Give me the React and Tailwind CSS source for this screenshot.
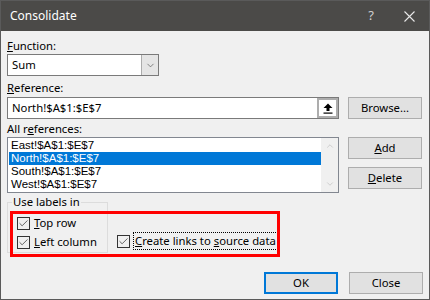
import { Check, ChevronDown, ChevronUp } from "lucide-react"

const font = { fontFamily: '"Noto Sans", "Liberation Sans", sans-serif' }
const listFont = { fontFamily: '"Liberation Sans", Arial, sans-serif' }

function Btn({ children, primary, className = "" }) {
  return (
    <div
      className={`h-[22px] w-[74px] flex items-center justify-center bg-[#e1e1e1] text-[11.3px] text-black ${
        primary ? "border-2 border-[#0078d7]" : "border border-[#adadad]"
      } ${className}`}
    >
      {children}
    </div>
  )
}

function Box() {
  return (
    <div className="w-[13px] h-[13px] border border-[#333] flex items-center justify-center shrink-0">
      <Check size={11} strokeWidth={1.6} className="text-[#333]" />
    </div>
  )
}

export default function App() {
  const refs = ["East!$A$1:$E$7", "North!$A$1:$E$7", "South!$A$1:$E$7", "West!$A$1:$E$7"]

  return (
    <div style={font} className="w-[430px] h-[300px] bg-[#f0f0f0] border border-[#5a5a5a] flex flex-col text-[11.3px] text-black overflow-hidden">
      {/* Title bar */}
      <div className="h-[30px] bg-[#4b4a48] flex items-center text-white shrink-0">
        <span className="ml-[9px] text-[12px]">Consolidate</span>
        <span className="ml-auto text-[13px] text-[#d0d0d0] mr-[30px]">?</span>
        <svg width="11" height="11" viewBox="0 0 11 11" className="mr-[14px]">
          <path d="M0.5 0.5 L10.5 10.5 M10.5 0.5 L0.5 10.5" stroke="#e8e8e8" strokeWidth="1.1" />
        </svg>
      </div>

      <div className="relative flex flex-col pl-[6px] pr-[6px]">
        <div className="mt-[7px] h-[16px] leading-[16px]"><u>F</u>unction:</div>
        <div className="w-[152px] h-[22px] border border-[#7a7a7a] bg-white flex">
          <span className="pl-[4px] leading-[20px]">Sum</span>
          <div className="ml-auto w-[17px] h-full bg-[#e5e5e5] border-l border-[#acacac] flex items-center justify-center">
            <ChevronDown size={11} strokeWidth={1.5} className="text-[#555]" />
          </div>
        </div>

        <div className="mt-[4px] h-[16px] leading-[16px]"><u>R</u>eference:</div>
        <div className="mt-[1px] flex gap-[9px]">
          <div className="w-[332px] h-[22px] border border-[#7a7a7a] bg-white flex">
            <span className="pl-[4px] leading-[20px]">North!$A$1:$E$7</span>
            <div className="ml-auto w-[21px] h-full border-2 border-[#adadad] bg-white flex items-center justify-center">
              <svg width="10" height="11" viewBox="0 0 10 11">
                <path d="M5 0.5 L9.5 5 L6.5 5 L6.5 8 L3.5 8 L3.5 5 L0.5 5 Z" fill="#000" />
                <rect x="0.5" y="9.5" width="9" height="1.2" fill="#000" />
              </svg>
            </div>
          </div>
          <Btn>Browse...</Btn>
        </div>

        <div className="mt-[2px] h-[16px] leading-[16px]">All r<u>e</u>ferences:</div>
        <div className="flex gap-[9px]">
          <div className="w-[332px] h-[56px] border border-[#828790] bg-white flex">
            <div style={listFont} className="flex-1 pt-[1px] pl-[1px] text-[11.5px]">
              {refs.map((r, i) => (
                <div
                  key={r}
                  className={`h-[13px] leading-[13px] pl-[2px] ${i === 1 ? "bg-[#0078d7] text-white" : ""}`}
                >
                  {r}
                </div>
              ))}
            </div>
            <div className="w-[17px] h-full bg-[#f0f0f0] flex flex-col items-center justify-between py-[3px]">
              <ChevronUp size={10} strokeWidth={1.6} className="text-[#bcbcbc]" />
              <ChevronDown size={10} strokeWidth={1.6} className="text-[#bcbcbc]" />
            </div>
          </div>
          <div className="flex flex-col gap-[8px]">
            <Btn><span><u>A</u>dd</span></Btn>
            <Btn><span><u>D</u>elete</span></Btn>
          </div>
        </div>

        {/* Labels group */}
        <div className="mt-[9px] flex items-end">
          <div className="relative w-[101px] h-[51px] border border-[#dcdcdc] shrink-0">
            <span className="absolute -top-[9px] left-[4px] bg-[#f0f0f0] px-[1px] leading-[16px]">Use labels in</span>
            <div className="mt-[14px] ml-[9px] flex items-center gap-[4px] h-[13px]">
              <Box />
              <span><u>T</u>op row</span>
            </div>
            <div className="mt-[6px] ml-[9px] flex items-center gap-[4px] h-[13px]">
              <Box />
              <span><u>L</u>eft column</span>
            </div>
          </div>
          <div className="ml-[9px] mb-[3px] flex items-center gap-[3px]">
            <Box />
            <span className="border border-dotted border-black px-[1px] h-[18px] leading-[16px]">
              <u>C</u>reate links to <u>s</u>ource data
            </span>
          </div>
        </div>

        {/* annotation */}
        <div className="absolute left-[9px] top-[180px] w-[270px] h-[46px] border-[3px] border-[#ff0000]" />

        <div className="mt-[19px] flex justify-end gap-[11px]">
          <Btn primary>OK</Btn>
          <Btn>Close</Btn>
        </div>
      </div>
    </div>
  )
}
